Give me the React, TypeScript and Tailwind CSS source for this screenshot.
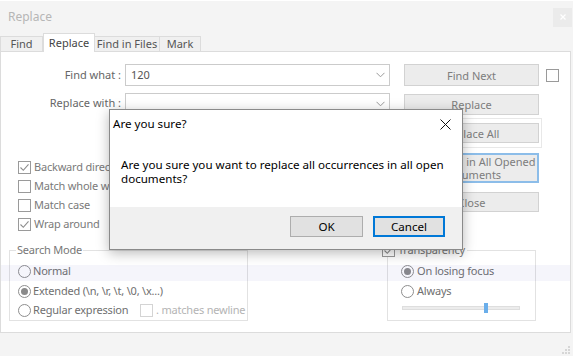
import React from "react";

const font = { fontFamily: '"Noto Sans", "Open Sans", sans-serif' };

function Check({ checked = false, faint = false }: { checked?: boolean; faint?: boolean }) {
  return (
    <span
      className={`w-[13px] h-[13px] shrink-0 border bg-white flex items-center justify-center ${
        faint ? "border-[#d4d4d4]" : "border-[#9a9a9a]"
      }`}
    >
      {checked && (
        <svg width="11" height="11" viewBox="0 0 11 11">
          <path d="M1.5 5.5 L4.3 8.3 L9.5 2.3" fill="none" stroke="#8c8c8c" strokeWidth="1.1" />
        </svg>
      )}
    </span>
  );
}

function Radio({ on = false }: { on?: boolean }) {
  return (
    <span className="w-[13px] h-[13px] shrink-0 rounded-full border border-[#8e8e8e] bg-white flex items-center justify-center">
      {on && <span className="w-[7px] h-[7px] rounded-full bg-[#8a8a8a]" />}
    </span>
  );
}

function Combo({ value = "", h }: { value?: string; h: string }) {
  return (
    <div className={`w-[265px] ${h} border border-[#cbcbcb] bg-white flex items-center justify-between pl-[5px] pr-[4px]`}>
      <span className="text-[11px] text-[#555]">{value}</span>
      <svg width="9" height="6" viewBox="0 0 9 6">
        <path d="M0.5 0.8 L4.5 4.8 L8.5 0.8" fill="none" stroke="#9a9a9a" strokeWidth="1" />
      </svg>
    </div>
  );
}

function Btn({ children, h, blue = false }: { children: React.ReactNode; h: string; blue?: boolean }) {
  return (
    <div
      className={`w-[135px] ${h} bg-[#ececec] border ${
        blue ? "border-[#8cbde9] border-2" : "border-[#d2d2d2]"
      } flex items-center justify-center text-center whitespace-nowrap text-[11px] leading-[13px] text-[#7d7d7d]`}
    >
      {children}
    </div>
  );
}

const tabs = [
  { label: "Find", w: "w-[43px]" },
  { label: "Replace", w: "w-[52px]", active: true },
  { label: "Find in Files", w: "w-[65px]" },
  { label: "Mark", w: "w-[41px]" },
];

export default function App() {
  return (
    <div className="w-[573px] h-[356px] bg-[#f4f4f4] relative overflow-hidden flex flex-col whitespace-nowrap" style={font}>
      {/* title bar */}
      <div className="h-[33px] flex items-center justify-between pl-[8px] pr-[1px] border-t border-white">
        <span className="text-[12px] text-[#b6b6b6]">Replace</span>
        <div className="w-[19px] h-[19px] bg-[#ebebeb] flex items-center justify-center">
          <svg width="6" height="6" viewBox="0 0 6 6">
            <path d="M0.5 0.5 L5.5 5.5 M5.5 0.5 L0.5 5.5" stroke="#fff" strokeWidth="1.2" />
          </svg>
        </div>
      </div>

      {/* tabs */}
      <div className="h-[18px] flex items-end relative z-10">
        {tabs.map((t) =>
          t.active ? (
            <div
              key={t.label}
              className={`${t.w} h-[19px] -mb-px bg-white border border-b-0 border-[#dcdcdc] flex items-start pt-[1px] justify-center text-[11px] text-[#444]`}
            >
              {t.label}
            </div>
          ) : (
            <div
              key={t.label}
              className={`${t.w} h-[15px] bg-[#f0f0f0] border border-b-0 border-l-0 first:border-l border-[#dcdcdc] flex items-center justify-center text-[11px] text-[#555]`}
            >
              {t.label}
            </div>
          )
        )}
      </div>

      {/* panel */}
      <div className="w-[571px] h-[282px] bg-white border border-[#dcdcdc] relative">
        <div className="flex items-start pt-[12px]">
          {/* left column */}
          <div className="w-[390px] flex flex-col">
            <div className="h-[22px] flex items-center gap-[4px]">
              <span className="w-[120px] text-right text-[11px] text-[#666]">Find what :</span>
              <Combo value="120" h="h-[22px]" />
            </div>
            <div className="h-[21px] mt-[7px] flex items-center gap-[4px]">
              <span className="w-[120px] text-right text-[11px] text-[#666]">Replace with :</span>
              <Combo h="h-[21px]" />
            </div>
            <div className="mt-[44px] flex flex-col pl-[17px] text-[11px] tracking-[-0.2px] text-[#7a7a7a]">
              {[
                ["Backward direction", true],
                ["Match whole word only", false],
                ["Match case", false],
                ["Wrap around", true],
              ].map(([l, c]) => (
                <div key={l as string} className="h-[19px] flex items-center gap-[3px]">
                  <Check checked={c as boolean} />
                  <span>{l as string}</span>
                </div>
              ))}
            </div>
          </div>

          {/* buttons */}
          <div className="ml-[13px] flex flex-col">
            <Btn h="h-[22px]">Find Next</Btn>
            <div className="mt-[8px]">
              <Btn h="h-[21px]">Replace</Btn>
            </div>
            <div className="mt-[3px] -mx-[3px] px-[2px] py-[4px] border border-[#e8e8e8]">
              <Btn h="h-[20px]">Replace All</Btn>
            </div>
            <div className="mt-[5px]">
              <Btn h="h-[30px]" blue>
                Replace All in All Opened
                <br />
                Documents
              </Btn>
            </div>
            <div className="mt-[9px]">
              <Btn h="h-[20px]">Close</Btn>
            </div>
          </div>

          <div className="ml-[7px] mt-[5px]">
            <Check />
          </div>
        </div>

        {/* bottom groups */}
        <div className="mt-[16px] flex items-start text-[11px] tracking-[-0.2px] text-[#6f6f6f]">
          <div className="ml-[8px] w-[239px] h-[71px] border border-[#e2e2e2] flex flex-col">
            <span className="-mt-[8px] ml-[6px] px-[1px] bg-white w-fit leading-[14px] text-[#777]">Search Mode</span>
            <div className="mt-[4px] pl-[8px] flex flex-col">
              <div className="h-[20px] flex items-center gap-[2px]">
                <Radio />
                <span>Normal</span>
              </div>
              <div className="h-[20px] flex items-center gap-[2px]">
                <Radio on />
                <span>Extended (\n, \r, \t, \0, \x...)</span>
              </div>
              <div className="h-[19px] flex items-center">
                <div className="w-[122px] flex items-center gap-[2px]">
                  <Radio />
                  <span>Regular expression</span>
                </div>
                <Check faint />
                <span className="ml-[3px] text-[#b4b4b4]">. matches newline</span>
              </div>
            </div>
          </div>

          <div className="ml-[134px] w-[154px]">
            <div className="ml-[5px] w-[149px] h-[71px] border border-[#e2e2e2] flex flex-col">
              <div className="-mt-[8px] -ml-[6px] h-[14px] pr-[2px] bg-white w-fit flex items-center gap-[3px]">
                <Check checked />
                <span className="text-[#777]">Transparency</span>
              </div>
              <div className="mt-[4px] pl-[13px] flex flex-col">
                <div className="h-[20px] flex items-center gap-[3px]">
                  <Radio on />
                  <span>On losing focus</span>
                </div>
                <div className="h-[20px] flex items-center gap-[3px]">
                  <Radio />
                  <span>Always</span>
                </div>
                <div className="mt-[2px] h-[10px] relative">
                  <div className="absolute left-[1px] top-[3px] w-[118px] h-[4px] bg-[#ececec] border border-[#dedede]" />
                  <div className="absolute left-[83px] top-0 w-[4px] h-[10px] bg-[#6aaeea]" />
                </div>
              </div>
            </div>
          </div>
        </div>

        {/* hover band */}
        <div className="absolute left-0 right-0 top-[213px] h-[16px] bg-[#5050c0]/[0.06] pointer-events-none" />
      </div>

      {/* bottom bar with grip */}
      <div className="flex-1 flex justify-end items-end pr-[2px] pb-[1px]">
        <svg width="9" height="9" viewBox="0 0 9 9">
          <rect x="6" y="0" width="2" height="2" fill="#d6d6d6" />
          <rect x="3" y="3" width="2" height="2" fill="#d6d6d6" />
          <rect x="6" y="3" width="2" height="2" fill="#d6d6d6" />
          <rect x="0" y="6" width="2" height="2" fill="#d6d6d6" />
          <rect x="3" y="6" width="2" height="2" fill="#d6d6d6" />
          <rect x="6" y="6" width="2" height="2" fill="#d6d6d6" />
        </svg>
      </div>

      {/* confirm dialog */}
      <div className="absolute left-[109px] top-[109px] w-[354px] h-[141px] bg-white border border-[#8a8a8a] shadow-[0_3px_12px_rgba(0,0,0,0.28)] z-20 flex flex-col">
        <div className="h-[28px] flex items-center justify-between pl-[3px] pr-[11px]">
          <span className="text-[11.6px] text-black">Are you sure?</span>
          <svg width="11" height="11" viewBox="0 0 11 11">
            <path d="M0.5 0.5 L10.5 10.5 M10.5 0.5 L0.5 10.5" stroke="#111" strokeWidth="1" />
          </svg>
        </div>
        <div className="flex-1 pl-[11px] pt-[20px] text-[11.6px] leading-[14px] text-black">
          Are you sure you want to replace all occurrences in all open
          <br />
          documents?
        </div>
        <div className="h-[42px] bg-[#f0f0f0] flex justify-end items-start pt-[9px] pr-[17px] gap-[10px]">
          <div className="w-[73px] h-[21px] bg-[#e1e1e1] border border-[#adadad] flex items-center justify-center text-[11.6px] text-black">
            OK
          </div>
          <div className="w-[72px] h-[21px] bg-[#e1e1e1] border-2 border-[#0078d7] flex items-center justify-center text-[11.6px] text-black">
            Cancel
          </div>
        </div>
      </div>
    </div>
  );
}
